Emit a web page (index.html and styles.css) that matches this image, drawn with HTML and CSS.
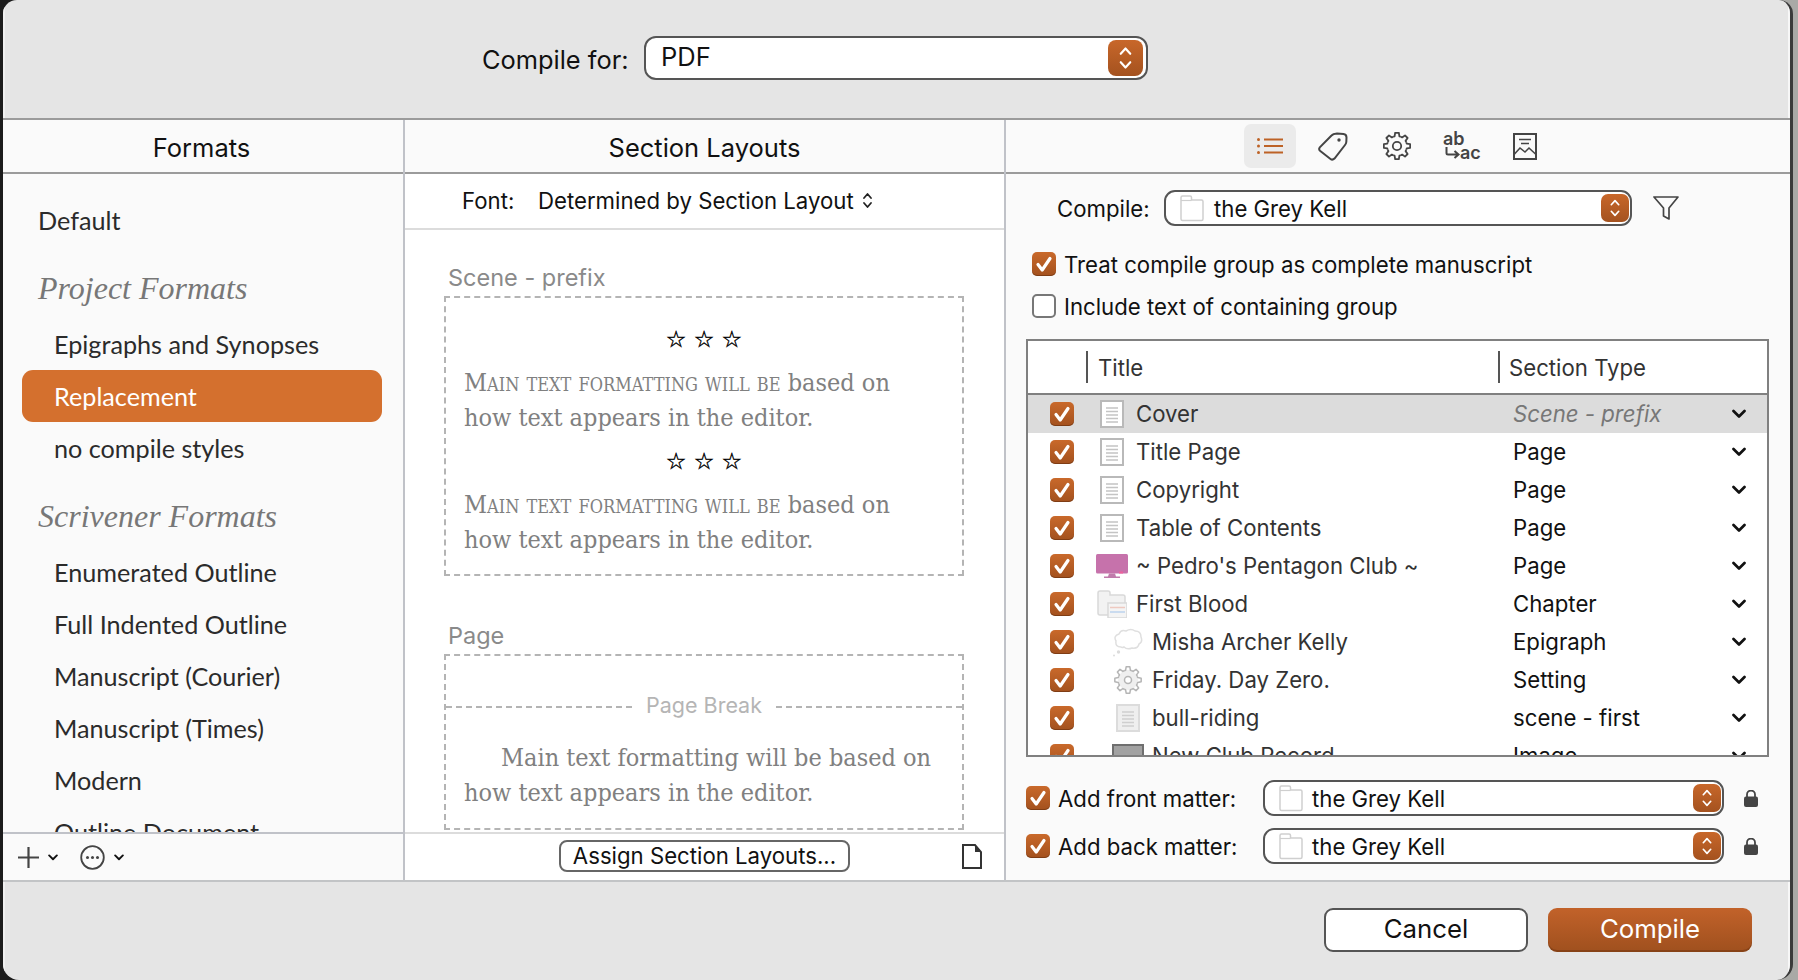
FILE: index.html
```html
<!DOCTYPE html>
<html lang="en">
<head>
<meta charset="utf-8">
<title>Compile</title>
<link rel="stylesheet" href="styles.css">
</head>
<body>
<svg class="defs" width="0" height="0" aria-hidden="true">
  <defs>
    <path id="tooth" d="M-3.83 -9.24L-2.42 -9.7L-1.85 -13.17L1.85 -13.17L2.42 -9.7L3.83 -9.24"/>
    <symbol id="i-check" viewBox="0 0 24 24"><path d="M6 12.5l4.2 5.5L18 6.5" fill="none" stroke="#fff" stroke-width="3.2" stroke-linecap="round" stroke-linejoin="round"/></symbol>
    <symbol id="i-step" viewBox="0 0 28 34"><path d="M9.5 13L14 8l4.5 5M9.5 21L14 26l4.5-5" fill="none" stroke="#fff" stroke-width="2" stroke-linecap="round" stroke-linejoin="round"/></symbol>
    <symbol id="i-chev" viewBox="0 0 14 10"><path d="M1.5 2L7 7.5 12.500 2" fill="none" stroke="#111" stroke-width="2.700" stroke-linecap="round" stroke-linejoin="round"/></symbol>
    <symbol id="i-doc" viewBox="0 0 24 28"><rect x="1" y="1" width="22" height="26" fill="#fff" stroke="#b9b9b9" stroke-width="2"/><path d="M6 8h12M6 11.500h12M6 15h12M6 18.500h12M6 22h12" stroke="#c4c4c4" stroke-width="1.300"/></symbol>
    <symbol id="i-doc2" viewBox="0 0 24 28"><rect x="1" y="1" width="22" height="26" fill="#efefef" stroke="#dcdcdc" stroke-width="2"/><path d="M6 8h12M6 11.500h12M6 15h12M6 18.500h12M6 22h12" stroke="#cfcfcf" stroke-width="1.300"/></symbol>
    <symbol id="i-folder" viewBox="0 0 24 28"><path d="M1 6V3.500Q1 2 2.500 2H10Q11.500 2 11.500 3.500V6H21.500Q23 6 23 7.500V25Q23 26.500 21.500 26.500H2.500Q1 26.500 1 25Z" fill="#fff" stroke="#cfcfcf" stroke-width="1.500"/><path d="M1 6.500H11.500" stroke="#cfcfcf" stroke-width="1.200"/></symbol>
  </defs>
</svg>
<div class="window">
  <header class="topbar">
    <span class="topbar-label">Compile for:</span>
    <div class="popup popup-main">
      <span class="popup-text">PDF</span>
      <span class="stepper"><svg width="35" height="36"><use href="#i-step"/></svg></span>
    </div>
  </header>

  <main class="panels">
    <section class="col col-left">
      <h2 class="col-head">Formats</h2>
      <div class="format-list">
        <div class="fmt fmt-top">Default</div>
        <div class="fmt-head fmt-head-1">Project Formats</div>
        <div class="fmt">Epigraphs and Synopses</div>
        <div class="fmt fmt-sel">Replacement</div>
        <div class="fmt">no compile styles</div>
        <div class="fmt-head fmt-head-2">Scrivener Formats</div>
        <div class="fmt">Enumerated Outline</div>
        <div class="fmt">Full Indented Outline</div>
        <div class="fmt">Manuscript (Courier)</div>
        <div class="fmt">Manuscript (Times)</div>
        <div class="fmt">Modern</div>
        <div class="fmt">Outline Document</div>
      </div>
      <div class="col-foot left-foot">
        <svg width="21" height="21" viewBox="0 0 21 21"><path d="M10.500 0v21M0 10.500h21" stroke="#444" stroke-width="2.200"/></svg>
        <svg class="foot-chev" width="10" height="7"><use href="#i-chev"/></svg>
        <svg class="foot-more" width="25" height="25" viewBox="0 0 25 25"><circle cx="12.500" cy="12.500" r="11.300" fill="none" stroke="#444" stroke-width="1.800"/><circle cx="7.500" cy="12.500" r="1.500" fill="#444"/><circle cx="12.500" cy="12.500" r="1.500" fill="#444"/><circle cx="17.500" cy="12.500" r="1.500" fill="#444"/></svg>
        <svg class="foot-chev" width="10" height="7"><use href="#i-chev"/></svg>
      </div>
    </section>

    <section class="col col-mid">
      <h2 class="col-head">Section Layouts</h2>
      <div class="font-row">
        <span class="font-label">Font:</span>
        <span>Determined by Section Layout</span>
        <svg class="font-step" width="11" height="17" viewBox="0 0 11 17"><path d="M2 6l3.500-4L9 6M2 11l3.500 4L9 11" fill="none" stroke="#222" stroke-width="1.800" stroke-linecap="round" stroke-linejoin="round"/></svg>
      </div>
      <div class="layouts">
        <div class="layout-name">Scene - prefix</div>
        <div class="dash-box box-scene">
          <div class="stars">☆ ☆ ☆</div>
          <p class="sample"><span class="caps">Main text formatting will be</span> based on<br>how text appears in the editor.</p>
          <div class="stars">☆ ☆ ☆</div>
          <p class="sample"><span class="caps">Main text formatting will be</span> based on<br>how text appears in the editor.</p>
        </div>
        <div class="layout-name layout-name-2">Page</div>
        <div class="dash-box box-page">
          <div class="page-break"><span>Page Break</span></div>
          <p class="sample sample-indent">Main text formatting will be based on<br>how text appears in the editor.</p>
        </div>
      </div>
      <div class="col-foot mid-foot">
        <button class="btn-small">Assign Section Layouts...</button>
        <svg class="foot-doc" width="20" height="25" viewBox="0 0 20 25"><path d="M1 1H13L19 8V24H1Z" fill="#fff" stroke="#333" stroke-width="2"/><path d="M13 1V8H19Z" fill="#333"/></svg>
      </div>
    </section>

    <section class="col col-right">
      <div class="toolbar">
        <span class="tool tool-on">
          <svg width="26" height="16" viewBox="0 0 26 16"><g fill="#bd6226"><circle cx="1.500" cy="1.500" r="1.500"/><circle cx="1.500" cy="8" r="1.500"/><circle cx="1.500" cy="14.500" r="1.500"/></g><path d="M7 1.500h19M7 8h19M7 14.500h19" stroke="#bd6226" stroke-width="1.800"/></svg>
        </span>
        <span class="tool">
          <svg width="30" height="29" viewBox="0 0 30 29"><path d="M19 1.500L25.500 2Q28.500 2.300 28.500 5.500L28.300 10Q28.200 11.500 27 13L16.500 26.500Q14.500 28.500 12.500 27L2.300 19Q0.300 17.300 1.800 15.300L13.500 3.500Q15 1.800 19 1.500Z" fill="none" stroke="#444" stroke-width="2"/><circle cx="21" cy="8" r="1.700" fill="#444"/></svg>
        </span>
        <span class="tool">
          <svg width="28" height="28" viewBox="-14 -14 28 28"><g fill="none" stroke="#444" stroke-width="1.800" stroke-linejoin="round"><use href="#tooth"/><use href="#tooth" transform="rotate(45)"/><use href="#tooth" transform="rotate(90)"/><use href="#tooth" transform="rotate(135)"/><use href="#tooth" transform="rotate(180)"/><use href="#tooth" transform="rotate(225)"/><use href="#tooth" transform="rotate(270)"/><use href="#tooth" transform="rotate(315)"/><circle r="4.200"/></g></svg>
        </span>
        <span class="tool">
          <svg class="ab-icon" width="37" height="30" viewBox="0 0 37 30"><text x="0" y="14" class="ab-text">ab</text><text x="17" y="28" class="ab-text">ac</text><path d="M3.500 16v6q0 1.500 1.500 1.500H15M11.500 20l4 3.500-4 3.500" fill="none" stroke="#444" stroke-width="2"/></svg>
        </span>
        <span class="tool">
          <svg width="24" height="27" viewBox="0 0 24 27"><rect x="1" y="1" width="22" height="25" fill="none" stroke="#444" stroke-width="2"/><path d="M6 6.500h12M8 10.500h8" stroke="#444" stroke-width="1.600"/><path d="M1.500 21L7 15l5 4 4-4 6.500 6" fill="none" stroke="#444" stroke-width="1.600"/></svg>
        </span>
      </div>
      <div class="compile-row">
        <span>Compile:</span>
        <div class="popup popup-folder popup-compile">
          <svg width="24" height="28"><use href="#i-folder"/></svg>
          <span class="popup-name">the Grey Kell</span>
          <span class="stepper stepper-sm"><svg width="28" height="28"><use href="#i-step"/></svg></span>
        </div>
        <svg class="funnel" width="26" height="24" viewBox="0 0 26 24"><path d="M1 1H25L16 12V23L10.500 20V12Z" fill="none" stroke="#444" stroke-width="1.700" stroke-linejoin="round"/></svg>
      </div>
      <label class="opt"><span class="cb"><svg width="24" height="24"><use href="#i-check"/></svg></span>Treat compile group as complete manuscript</label>
      <label class="opt"><span class="cb cb-off"></span>Include text of containing group</label>

      <div class="table">
        <div class="thead">
          <span class="th th-title">Title</span>
          <span class="th th-type">Section Type</span>
        </div>
        <div class="tr tr-sel">
          <div class="td"><span class="cb"><svg width="24" height="24"><use href="#i-check"/></svg></span><span class="ic"><svg width="24" height="28"><use href="#i-doc"/></svg></span>Cover</div>
          <div class="td-type td-italic">Scene - prefix</div><svg class="chev" width="14" height="10"><use href="#i-chev"/></svg>
        </div>
        <div class="tr">
          <div class="td"><span class="cb"><svg width="24" height="24"><use href="#i-check"/></svg></span><span class="ic"><svg width="24" height="28"><use href="#i-doc"/></svg></span>Title Page</div>
          <div class="td-type">Page</div><svg class="chev" width="14" height="10"><use href="#i-chev"/></svg>
        </div>
        <div class="tr">
          <div class="td"><span class="cb"><svg width="24" height="24"><use href="#i-check"/></svg></span><span class="ic"><svg width="24" height="28"><use href="#i-doc"/></svg></span>Copyright</div>
          <div class="td-type">Page</div><svg class="chev" width="14" height="10"><use href="#i-chev"/></svg>
        </div>
        <div class="tr">
          <div class="td"><span class="cb"><svg width="24" height="24"><use href="#i-check"/></svg></span><span class="ic"><svg width="24" height="28"><use href="#i-doc"/></svg></span>Table of Contents</div>
          <div class="td-type">Page</div><svg class="chev" width="14" height="10"><use href="#i-chev"/></svg>
        </div>
        <div class="tr">
          <div class="td"><span class="cb"><svg width="24" height="24"><use href="#i-check"/></svg></span><span class="ic"><svg width="32" height="24" viewBox="0 0 32 24"><rect x="0" y="0" width="32" height="19.500" rx="1.500" fill="#c672ab"/><rect x="23" y="17.500" width="4" height="2" fill="#ee5f9c"/><path d="M13 19.500h6l1 3h4v1.500H8v-1.500h4Z" fill="#c07aab"/></svg></span>~ Pedro's Pentagon Club ~</div>
          <div class="td-type">Page</div><svg class="chev" width="14" height="10"><use href="#i-chev"/></svg>
        </div>
        <div class="tr">
          <div class="td"><span class="cb"><svg width="24" height="24"><use href="#i-check"/></svg></span><span class="ic"><svg width="30" height="28" viewBox="0 0 30 28"><path d="M1 5V3Q1 1 3 1H11Q13 1 13 3V5H26Q28 5 28 7V23Q28 25 26 25H3Q1 25 1 23Z" fill="#f2f2f2" stroke="#d9d9d9" stroke-width="1.500"/><rect x="11" y="13" width="19" height="15" fill="#f4f4f4" stroke="#d9d9d9" stroke-width="1.500"/><path d="M13 17.500h15" stroke="#eec9c0" stroke-width="1.500"/><path d="M13 22h15" stroke="#bcd3ee" stroke-width="1.500"/></svg></span>First Blood</div>
          <div class="td-type">Chapter</div><svg class="chev" width="14" height="10"><use href="#i-chev"/></svg>
        </div>
        <div class="tr tr-child">
          <div class="td"><span class="cb"><svg width="24" height="24"><use href="#i-check"/></svg></span><span class="ic"><svg width="30" height="29" viewBox="0 0 30 29"><path d="M8 19Q2 19 3 13Q0 8 6 6Q8 1 13 3Q18 0 22 3Q28 3 28 9Q30 14 26 16Q25 21 19 20Q14 22 11 19Q9 20 8 19Z" fill="#fff" stroke="#dfdfdf" stroke-width="1.500"/><circle cx="5.500" cy="24" r="1.700" fill="#dcdcdc"/><circle cx="1" cy="27.500" r="1" fill="#dcdcdc"/></svg></span>Misha Archer Kelly</div>
          <div class="td-type">Epigraph</div><svg class="chev" width="14" height="10"><use href="#i-chev"/></svg>
        </div>
        <div class="tr tr-child">
          <div class="td"><span class="cb"><svg width="24" height="24"><use href="#i-check"/></svg></span><span class="ic"><svg width="28" height="28" viewBox="-14 -14 28 28"><circle r="10" fill="#efefef"/><g fill="none" stroke="#b5b5b5" stroke-width="1.500" stroke-linejoin="round"><use href="#tooth"/><use href="#tooth" transform="rotate(45)"/><use href="#tooth" transform="rotate(90)"/><use href="#tooth" transform="rotate(135)"/><use href="#tooth" transform="rotate(180)"/><use href="#tooth" transform="rotate(225)"/><use href="#tooth" transform="rotate(270)"/><use href="#tooth" transform="rotate(315)"/><circle r="3.500" fill="#fff"/></g></svg></span>Friday. Day Zero.</div>
          <div class="td-type">Setting</div><svg class="chev" width="14" height="10"><use href="#i-chev"/></svg>
        </div>
        <div class="tr tr-child">
          <div class="td"><span class="cb"><svg width="24" height="24"><use href="#i-check"/></svg></span><span class="ic"><svg width="24" height="28"><use href="#i-doc2"/></svg></span>bull-riding</div>
          <div class="td-type">scene - first</div><svg class="chev" width="14" height="10"><use href="#i-chev"/></svg>
        </div>
        <div class="tr tr-child">
          <div class="td"><span class="cb"><svg width="24" height="24"><use href="#i-check"/></svg></span><span class="ic"><svg width="32" height="24" viewBox="0 0 32 24"><rect x="1" y="1" width="30" height="22" fill="#a2a2a2" stroke="#6f6f6f" stroke-width="2"/></svg></span>New Club Record</div>
          <div class="td-type">Image</div><svg class="chev" width="14" height="10"><use href="#i-chev"/></svg>
        </div>
      </div>

      <div class="matter-row matter-first">
        <span class="cb"><svg width="24" height="24"><use href="#i-check"/></svg></span>
        <span class="matter-label">Add front matter:</span>
        <div class="popup popup-folder popup-matter">
          <svg width="24" height="28"><use href="#i-folder"/></svg>
          <span class="popup-name">the Grey Kell</span>
          <span class="stepper stepper-sm"><svg width="28" height="28"><use href="#i-step"/></svg></span>
        </div>
        <svg class="lock" width="14" height="17" viewBox="0 0 14 17"><rect x="0" y="6.500" width="14" height="10.500" rx="2" fill="#444"/><path d="M3 7V4.500a4 4 0 0 1 8 0V7" fill="none" stroke="#444" stroke-width="1.800"/></svg>
      </div>
      <div class="matter-row">
        <span class="cb"><svg width="24" height="24"><use href="#i-check"/></svg></span>
        <span class="matter-label">Add back matter:</span>
        <div class="popup popup-folder popup-matter">
          <svg width="24" height="28"><use href="#i-folder"/></svg>
          <span class="popup-name">the Grey Kell</span>
          <span class="stepper stepper-sm"><svg width="28" height="28"><use href="#i-step"/></svg></span>
        </div>
        <svg class="lock" width="14" height="17" viewBox="0 0 14 17"><rect x="0" y="6.500" width="14" height="10.500" rx="2" fill="#444"/><path d="M3 7V4.500a4 4 0 0 1 8 0V7" fill="none" stroke="#444" stroke-width="1.800"/></svg>
      </div>
    </section>
  </main>

  <footer class="bottombar">
    <button class="btn btn-cancel">Cancel</button>
    <button class="btn btn-compile">Compile</button>
  </footer>
</div>
</body>
</html>
```
FILE: styles.css
```css
* { box-sizing: border-box; }
html, body { margin: 0; height: 100%; overflow: hidden; }
body {
  width: 1798px;
  height: 980px;
  background: linear-gradient(90deg, #1c1c1c 0 50%, #a9a9a6 50%);
  font-family: Inter, "Liberation Sans", sans-serif;
  color: #111;
}
.defs { position: absolute; }
svg { display: block; flex: none; }

.window {
  margin-left: 3px;
  width: 1790px;
  height: 980px;
  border-right: 3px solid #3a3a3a;
  border-radius: 14px 14px 16px 16px;
  background: #e5e5e5;
  overflow: hidden;
  display: flex;
  flex-direction: column;
}

.topbar {
  height: 120px;
  flex: none;
  border-bottom: 2px solid #9b9b9b;
  box-shadow: inset -2px 0 0 #f7f7f7, inset 2px 0 0 #f0f0f0;
  display: flex;
  align-items: flex-start;
  padding: 36px 0 0 479px;
}
.topbar-label { font-size: 25.400px; line-height: 48px; width: 162px; }

.popup {
  background: #fff;
  border: 2px solid #555;
  display: flex;
  align-items: center;
  position: relative;
}
.popup-main {
  width: 504px;
  height: 44px;
  border-radius: 12px;
  padding-left: 15px;
  font-size: 25.500px;
  justify-content: space-between;
  padding-right: 3px;
}
.popup-text { margin-top: -4px; }
.stepper {
  background: linear-gradient(#c8672a, #a4521f);
  border-radius: 8px;
  display: flex;
  align-items: center;
  justify-content: center;
  width: 35px;
  height: 36px;
}

.panels {
  height: 762px;
  flex: none;
  display: flex;
  background: #fafafa;
  border-bottom: 2px solid #c2c4c6;
}
.col { display: flex; flex-direction: column; height: 760px; flex: none; }
.col-left { width: 402px; border-right: 2px solid #c0c2c8; }
.col-mid { width: 601px; border-right: 2px solid #c0c2c8; background: #fff; }
.col-right { width: 784px; }

.col-head {
  margin: 0;
  height: 54px;
  flex: none;
  border-bottom: 2px solid #9b9b9b;
  background: #fafafa;
  font-size: 25.500px;
  font-weight: 400;
  line-height: 56px;
  text-align: center;
}
.col-left .col-head { padding-right: 3px; }

.format-list {
  height: 658px;
  flex: none;
  overflow: hidden;
  padding: 20px 21px 0 19px;
  font-family: Lato, "Open Sans", sans-serif;
  font-size: 25.200px;
  color: #2b2b2b;
}
.fmt {
  height: 52px;
  line-height: 52px;
  padding-left: 32px;
  border-radius: 11px;
  white-space: nowrap;
}
.fmt-top { padding-left: 16px; }
.fmt-sel { background: #d4702e; color: #fff; }
.fmt-head {
  height: 56px;
  line-height: 52px;
  padding-left: 16px;
  font-family: "Liberation Serif", serif;
  font-style: italic;
  font-size: 32px;
  color: #777;
}
.fmt-head-1 { margin-top: 16px; }
.fmt-head-2 { margin-top: 16px; }

.col-foot {
  height: 48px;
  flex: none;
  border-top: 2px solid #c0c2c8;
  display: flex;
  align-items: center;
}
.left-foot { padding: 0 0 0 15px; background: #fafafa; }
.foot-chev { margin-left: 9px; }
.foot-more { margin-left: 22px; }

.font-row {
  height: 56px;
  flex: none;
  border-bottom: 2px solid #dcdcdc;
  display: flex;
  align-items: center;
  padding: 0 0 2px 57px;
  font-size: 22.200px;
}
.font-label { width: 76px; }
.font-step { margin-left: 8px; }

.layouts { height: 602px; flex: none; overflow: hidden; padding: 30px 0 0 39px; }
.layout-name { font-size: 23.500px; line-height: 36px; color: #8a8a8a; padding-left: 4px; height: 36px; }
.layout-name-2 { margin-top: 42px; }
.dash-box {
  width: 520px;
  border: 2px dashed #b4b4b4;
  padding: 0 18px;
  font-family: "DejaVu Serif Condensed", "DejaVu Serif", serif;
  color: #808080;
}
.box-scene { height: 280px; padding-top: 28px; }
.box-page { height: 176px; }
.stars {
  font-family: "DejaVu Sans", sans-serif;
  font-size: 23px;
  line-height: 26px;
  color: #000;
  -webkit-text-stroke: .4px #000;
  text-align: center;
  height: 39px;
}
.sample {
  margin: 0 0 13px;
  font-size: 25px;
  line-height: 35px;
  white-space: nowrap;
}
.caps { font-variant: small-caps; }
.sample-indent { text-indent: 37px; margin-top: 32px; }
.page-break {
  height: 52px;
  margin: 0 -18px;
  border-bottom: 2px dashed #b4b4b4;
  display: flex;
  align-items: flex-end;
  justify-content: center;
  font-family: Inter, sans-serif;
  font-size: 21.500px;
  color: #b5b5b5;
}
.page-break span { background: #fff; padding: 0 12px; position: relative; top: 12px; line-height: 26px; }

.mid-foot {
  justify-content: flex-start;
  border-top-color: #dcdcdc;
  background: #fff;
  padding: 0 0 2px 154px;
}
.btn-small {
  width: 291px;
  height: 32px;
  border: 2px solid #666;
  border-radius: 8px;
  background: #fff;
  font: 400 22.200px Inter, sans-serif;
  color: #111;
  padding: 0 0 7px;
}
.foot-doc { margin-left: 112px; }

.toolbar {
  height: 54px;
  flex: none;
  border-bottom: 2px solid #9b9b9b;
  display: flex;
  align-items: center;
  padding: 0 0 0 238px;
}
.tool { width: 64px; height: 44px; display: flex; align-items: center; justify-content: center; }
.tool-on { width: 52px; background: #ebebeb; border-radius: 7px; margin-right: 5px; }
.ab-text { font: 600 18px Inter, sans-serif; fill: #444; }
.ab-icon { overflow: visible; }

.compile-row {
  height: 36px;
  margin-top: 16px;
  padding-left: 51px;
  display: flex;
  align-items: center;
  font-size: 22.200px;
}
.compile-row > span { width: 107px; }
.popup-folder {
  border-radius: 11px;
  height: 36px;
  padding-left: 14px;
  font-size: 22.200px;
}
.popup-name { margin-left: 9px; flex: 1; }
.popup-compile { width: 468px; }
.popup-compile .popup-name { margin-left: 10px; }
.stepper-sm { width: 28px; height: 28px; margin-right: 1px; border-radius: 7px; }
.funnel { margin-left: 21px; }

.opt { display: flex; align-items: center; font-size: 22.200px; padding-left: 26px; height: 42px; }
.opt:first-of-type { margin-top: 17px; }
.opt .cb { margin-right: 8px; }

.cb {
  width: 24px;
  height: 24px;
  flex: none;
  border-radius: 5px;
  background: linear-gradient(#c9692b, #a3511e);
  box-shadow: inset 0 -1px 0 rgba(90, 40, 10, .5);
}
.cb-off { background: #fff; border: 2px solid #777; box-shadow: none; }

.table {
  margin: 12px 0 0 20px;
  width: 743px;
  height: 418px;
  border: 2px solid #808080;
  background: #fff;
  overflow: hidden;
  flex: none;
}
.thead {
  height: 54px;
  border-bottom: 2px solid #808080;
  display: flex;
  align-items: center;
  font-size: 22.200px;
  color: #333;
}
.th { border-left: 2px solid #555; height: 32px; line-height: 34px; padding-left: 10px; }
.th-title { margin-left: 58px; width: 412px; }
.th-type { padding-left: 9px; }
.tr {
  display: grid;
  grid-template-columns: 485px 219px 14px;
  height: 38px;
  align-items: center;
  font-size: 22.200px;
  white-space: nowrap;
}
.tr-sel { background: #dcdcdc; }
.td { display: flex; align-items: center; padding: 0 0 2px 22px; color: #333; }
.td .cb { margin-top: 2px; }
.ic { width: 36px; height: 30px; margin: 2px 6px 0 20px; display: flex; align-items: center; justify-content: center; }
.tr-child .ic { margin-left: 36px; }
.td-type { color: #111; padding-bottom: 2px; }
.td-italic { font-style: italic; color: #777; }

.matter-row {
  display: flex;
  align-items: center;
  height: 36px;
  padding-left: 20px;
  margin-top: 12px;
  font-size: 22.200px;
}
.matter-first { margin-top: 23px; }
.matter-label { width: 205px; margin-left: 8px; }
.popup-matter { width: 461px; }
.lock { margin-left: 20px; }

.bottombar {
  flex: 1;
  display: flex;
  align-items: flex-start;
  padding: 26px 0 0 1321px;
  box-shadow: inset -2px 0 0 #f7f7f7, inset 2px 0 0 #f0f0f0;
}
.btn {
  height: 44px;
  border-radius: 9px;
  font: 400 25.800px Inter, sans-serif;
  padding: 0 0 4px;
}
.btn-cancel { width: 204px; background: #fff; border: 2px solid #555; color: #111; }
.btn-compile {
  width: 204px;
  margin-left: 20px;
  border: 0;
  color: #fff;
  background: linear-gradient(#c2622a, #9f501e);
  box-shadow: inset 0 -2px 0 rgba(90, 40, 10, .35);
}
```
